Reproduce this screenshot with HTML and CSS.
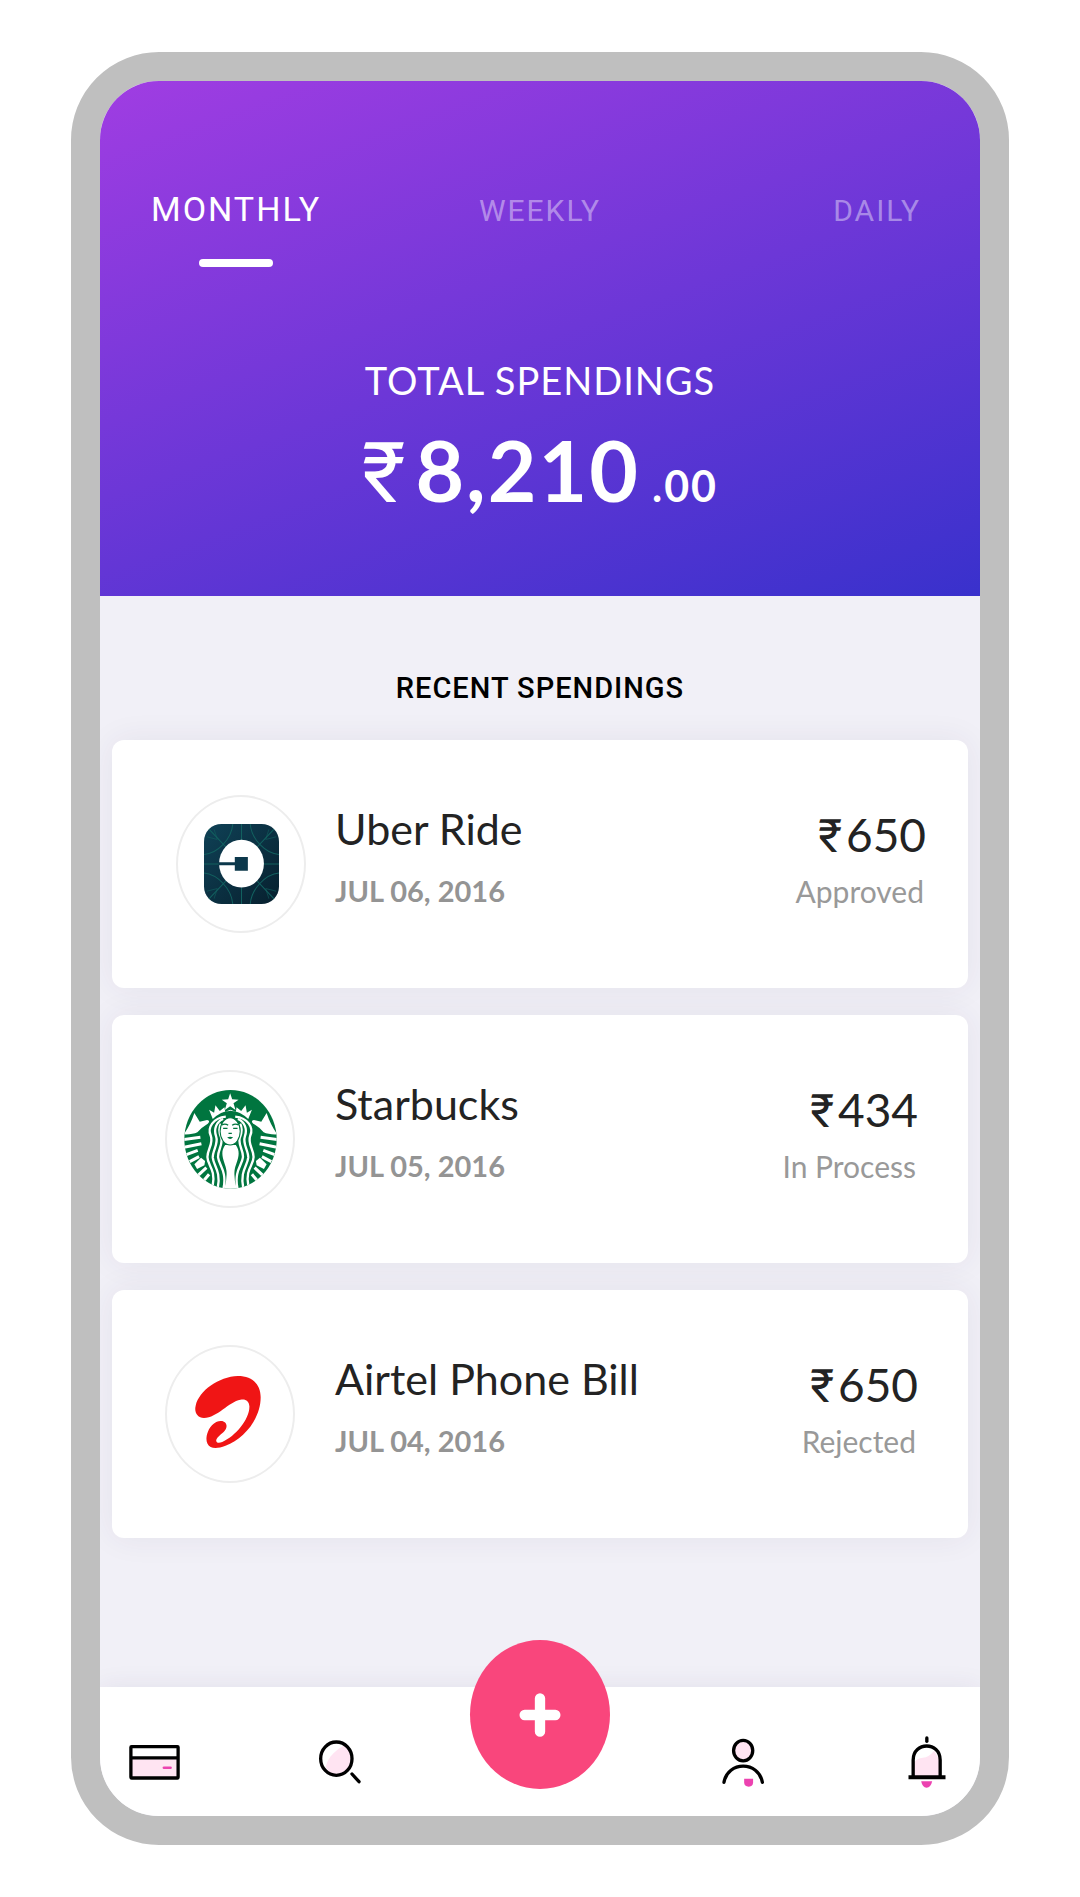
FILE: index.html
```html
<!DOCTYPE html>
<html lang="en">
<head>
  <meta charset="utf-8">
  <meta name="viewport" content="width=device-width, initial-scale=1">
  <title>Spendings</title>
  <link rel="stylesheet" href="styles.css">
</head>
<body>
  <div class="phone">
    <header class="summary">
      <nav class="tabs" aria-label="Period">
        <button class="tab tab--active" type="button" aria-current="true">MONTHLY</button>
        <button class="tab" type="button">WEEKLY</button>
        <button class="tab tab--last" type="button">DAILY</button>
      </nav>
      <h1 class="summary__label">TOTAL SPENDINGS</h1>
      <p class="total"><span class="total__currency">₹</span><span class="total__whole">8,210</span><span class="total__cents">.00</span></p>
    </header>

    <main class="recent">
      <h2 class="recent__title">RECENT SPENDINGS</h2>
      <ul class="spendings">
        <li class="spending spending--inset">
          <span class="logo">
            <svg width="75" height="80" viewBox="310 314 224 238" preserveAspectRatio="none" aria-hidden="true">
              <defs>
                <linearGradient id="uber-fill" x1="0" y1="0" x2="1" y2="1"><stop offset="0" stop-color="#0f4156"/><stop offset="1" stop-color="#07202e"/></linearGradient>
                <clipPath id="uber-clip"><rect x="310" y="314" width="224" height="238" rx="52"/></clipPath>
              </defs>
              <g clip-path="url(#uber-clip)">
                <rect x="310" y="314" width="224" height="238" fill="url(#uber-fill)"/>
                <g fill="none" stroke="#12605f" stroke-width="3">
                  <path d="M310 405C350 402 392 360 396 314M448 314C452 360 494 402 534 405M310 460C350 464 392 506 396 552M448 552C452 506 494 464 534 460"/>
                  <path d="M322 326L375 382M522 326L469 382M322 540L375 484M522 540L469 484M422 314V362M422 503V552M310 433H355M489 433H534"/>
                  <path d="M318 352L350 360M340 330L350 360M526 352L494 360M504 330L494 360M318 514L350 506M340 536L350 506M526 514L494 506M504 536L494 506" opacity=".6"/>
                </g>
              </g>
              <ellipse cx="422" cy="432" rx="67" ry="71" fill="#fff"/>
              <path d="M354 428H402V412H441V453H402V437H354Z" fill="#0c384b"/>
            </svg>
          </span>
          <div class="spending__info">
            <h3 class="spending__name">Uber Ride</h3>
            <p class="spending__date">JUL 06, 2016</p>
          </div>
          <div class="spending__sum">
            <p class="spending__amount"><span class="rupee">₹</span>650</p>
            <p class="spending__status">Approved</p>
          </div>
        </li>

        <li class="spending">
          <span class="logo">
            <svg width="93" height="99" viewBox="101 119 278 297" preserveAspectRatio="none" aria-hidden="true">
              <defs>
                <clipPath id="siren-clip"><ellipse cx="240" cy="267" rx="138" ry="148"/></clipPath>
                <g id="siren-half">
                  <path fill="#fff" d="M240 182Q214 180 187 206L176 178L191 187L195 165L208 182L222 171L224 184L240 178Z"/>
                  <path fill="#fff" d="M132 188L148 214L170 209Q181 211 172 220Q152 232 141 246Q126 253 100 252Q120 225 132 188Z"/>
                  <path fill="none" stroke="#fff" stroke-width="7" d="M226 199C188 203 170 232 181 256C190 280 171 296 171 320C171 345 196 356 187 404"/>
                  <path fill="none" stroke="#fff" stroke-width="7" d="M218 206C198 214 189 236 197 258C205 280 186 300 187 322C189 346 212 362 202 412"/>
                  <path fill="none" stroke="#fff" stroke-width="7" d="M211 220C203 236 207 250 212 262C219 282 200 302 203 322C206 346 230 362 219 416"/>
                  <path fill="none" stroke="#fff" stroke-width="9" d="M98 268L150 261M101 291L153 280M108 313L142 300M118 334L146 319M140 378L168 352M156 396L176 372"/>
                  <path fill="#fff" d="M132 342L152 322L164 332L162 345L140 356Z"/>
                </g>
              </defs>
              <g clip-path="url(#siren-clip)">
                <rect x="100" y="118" width="280" height="300" fill="#00753f"/>
                <use href="#siren-half"/>
                <use href="#siren-half" transform="translate(480 0) scale(-1 1)"/>
                <path fill="#fff" d="M224 284H256C276 312 254 338 252 362Q250 388 259 418H221Q230 388 228 362C226 338 204 312 224 284Z"/>
                <ellipse cx="239" cy="243" rx="30" ry="41" fill="#fff" stroke="#00753f" stroke-width="3"/>
                <path fill="none" stroke="#00753f" stroke-width="4" d="M214 224Q224 218 233 225M245 225Q254 218 264 224M218 234H231M248 234H261M234 249H244"/>
                <path fill="#00753f" d="M230 261Q239 258 248 261Q239 271 230 261Z"/>
              </g>
              <path fill="#fff" d="M239 129L245 147L264 148L249 159L255 179L239 168L223 179L229 159L214 148L233 147Z"/>
            </svg>
          </span>
          <div class="spending__info">
            <h3 class="spending__name">Starbucks</h3>
            <p class="spending__date">JUL 05, 2016</p>
          </div>
          <div class="spending__sum">
            <p class="spending__amount"><span class="rupee">₹</span>434</p>
            <p class="spending__status">In Process</p>
          </div>
        </li>

        <li class="spending">
          <span class="logo logo--airtel">
            <svg width="66" height="72" viewBox="133 141 199 216" preserveAspectRatio="none" aria-hidden="true">
              <path fill="#f01515" d="M160 267C140 266 130 250 135 230C145 185 205 143 262 141C305 141 331 165 331 205C331 270 280 330 225 350C205 358 190 358 180 354C165 346 165 325 172 308C180 288 195 277 210 276C225 275 232 288 226 300C220 312 200 322 197 333C196 342 205 343 215 339C255 322 298 270 297 232C296 215 285 209 270 212C235 218 200 266 160 267Z"/>
            </svg>
          </span>
          <div class="spending__info">
            <h3 class="spending__name">Airtel Phone Bill</h3>
            <p class="spending__date">JUL 04, 2016</p>
          </div>
          <div class="spending__sum">
            <p class="spending__amount"><span class="rupee">₹</span>650</p>
            <p class="spending__status">Rejected</p>
          </div>
        </li>
      </ul>
    </main>

    <nav class="bar" aria-label="Main">
      <div class="bar__group bar__group--start">
        <a class="bar__link" href="#cards" aria-label="Cards">
          <svg width="51" height="35" viewBox="207 373 153 106" aria-hidden="true">
            <rect x="212" y="378" width="143" height="96" rx="2" fill="#fff"/>
            <rect x="212" y="412" width="143" height="61" fill="#ffe4f2"/>
            <rect x="212" y="378" width="143" height="95" rx="2" fill="none" stroke="#000" stroke-width="10"/>
            <path d="M212 412H355" stroke="#000" stroke-width="10"/>
            <path d="M312 442H332" stroke="#ec42b0" stroke-width="8" stroke-linecap="round"/>
          </svg>
        </a>
        <a class="bar__link" href="#search" aria-label="Search">
          <svg width="42" height="44" viewBox="777 363 126 132" aria-hidden="true">
            <path d="M856 378C830 390 805 412 797 443Q808 468 829 468C860 468 876 446 876 420Q874 392 856 378Z" fill="#ffe4f2"/>
            <ellipse cx="829" cy="419" rx="47" ry="50" fill="none" stroke="#000" stroke-width="10"/>
            <path d="M876 465L897 488" stroke="#000" stroke-width="10" stroke-linecap="round"/>
          </svg>
        </a>
      </div>
      <button class="add" type="button" aria-label="Add spending">
        <svg width="42" height="44" viewBox="238 218 124 132" aria-hidden="true">
          <path d="M300 234V334M254 284H346" stroke="#fff" stroke-width="31" stroke-linecap="round"/>
        </svg>
      </button>
      <div class="bar__group bar__group--end">
        <a class="bar__link" href="#profile" aria-label="Profile">
          <svg width="42" height="49" viewBox="845 360 127 148" aria-hidden="true">
            <ellipse cx="909" cy="398" rx="29" ry="31" fill="#ffe4f2" stroke="#000" stroke-width="10"/>
            <path d="M851 494C862 429 956 429 967 494" fill="none" stroke="#000" stroke-width="10" stroke-linecap="round"/>
            <path d="M912 483H939V494Q939 507 926 507Q912 507 912 494Z" fill="#ec42b0"/>
          </svg>
        </a>
        <a class="bar__link" href="#alerts" aria-label="Notifications">
          <svg width="38" height="52" viewBox="626 108 113 156" aria-hidden="true">
            <path d="M704 152L722 182V228H642V190Q652 174 670 173Q688 172 704 152Z" fill="#ffe4f2"/>
            <path d="M641 230V180C641 124 722 124 722 180V230" fill="none" stroke="#000" stroke-width="10"/>
            <path d="M627 232H738" stroke="#000" stroke-width="12"/>
            <path d="M682 114V124" stroke="#000" stroke-width="10" stroke-linecap="round"/>
            <path d="M665 244H698Q694 263 681 263Q669 263 665 244Z" fill="#ec42b0"/>
          </svg>
        </a>
      </div>
    </nav>
  </div>
</body>
</html>
```

FILE: styles.css
```css
* {
  box-sizing: border-box;
}

body {
  margin: 0;
  padding: 52px 71px;
  background: #fff;
  color: #232323;
  font-family: Lato, "Open Sans", sans-serif;
}

h1, h2, h3, p, ul {
  margin: 0;
  padding: 0;
  font-weight: 400;
}

button {
  border: 0;
  background: none;
  cursor: pointer;
}

svg {
  display: block;
}

.phone {
  border: 29px solid #bfbfbf;
  border-radius: 88px;
  overflow: hidden;
  background: #f1f0f7;
}

/* Summary */
.summary {
  padding: 108px 51px 78px;
  background: linear-gradient(160deg, #a03de2, #3931cc);
  color: #fff;
  text-align: center;
}

.tabs {
  display: grid;
  grid-template-columns: 1fr auto 1fr;
  align-items: baseline;
}

.tab {
  padding: 0 8px;
  color: rgba(255, 255, 255, .42);
  font: 400 30px/40px Roboto, sans-serif;
  letter-spacing: 2px;
}

.tab--active {
  display: flex;
  flex-direction: column;
  align-items: center;
  gap: 30px;
  justify-self: start;
  padding: 0;
  color: #fff;
  font-size: 34px;
}

.tab--active::after {
  content: "";
  width: 74px;
  height: 8px;
  border-radius: 4px;
  background: #fff;
}

.tab--last {
  justify-self: end;
}

.summary__label {
  margin-top: 91px;
  font-size: 38px;
  line-height: 44px;
  letter-spacing: 1px;
}

.total {
  display: flex;
  justify-content: center;
  align-items: baseline;
  margin-top: 20px;
  font-size: 84px;
  font-weight: 700;
  line-height: 96px;
  letter-spacing: 2px;
}

.total__currency {
  margin-right: 8px;
  font-family: Roboto, sans-serif;
  font-weight: 400;
  line-height: 80px;
}

.total__cents {
  margin-left: 12px;
  font-size: 43px;
  line-height: 48px;
}

/* Recent spendings */
.recent {
  padding: 76px 12px 149px;
}

.recent__title {
  color: #000;
  font: 500 29px/32px Roboto, sans-serif;
  letter-spacing: 1px;
  text-align: center;
}

.spendings {
  display: grid;
  gap: 27px;
  margin-top: 36px;
  list-style: none;
}

.spending {
  display: grid;
  grid-template-columns: 130px 1fr auto;
  column-gap: 40px;
  padding: 55px 50px 55px 53px;
  border-radius: 12px;
  background: #fff;
  box-shadow: 0 0 32px rgba(50, 40, 90, .07);
}

.spending--inset {
  column-gap: 29px;
  padding-right: 42px;
  padding-left: 64px;
}

.logo {
  display: grid;
  place-items: center;
  height: 138px;
  border: 2px solid #ededed;
  border-radius: 50%;
}

.logo--airtel {
  padding: 0 4px 4px 0;
}

.spending__info {
  padding-top: 10px;
}

.spending__name {
  font-size: 43px;
  line-height: 48px;
}

.spending__date {
  margin-top: 20px;
  color: #949494;
  font-size: 29px;
  font-weight: 700;
  line-height: 36px;
}

.spending__sum {
  padding-top: 12px;
  text-align: right;
}

.spending__amount {
  font-size: 46px;
  line-height: 56px;
}

.rupee {
  margin-right: 4px;
  font-family: Roboto, sans-serif;
}

.spending__status {
  margin-top: 9px;
  padding-right: 2px;
  color: #999;
  font-size: 30px;
  line-height: 36px;
}

/* Bottom bar */
.bar {
  display: grid;
  grid-template-columns: 1fr 140px 1fr;
  background: #fff;
  box-shadow: 0 0 24px rgba(50, 40, 90, .08);
}

.bar__group {
  display: flex;
  justify-content: space-between;
  align-items: center;
  padding-top: 21px;
}

.bar__group--start {
  padding-right: 109px;
  padding-left: 29px;
}

.bar__group--end {
  padding-right: 34px;
  padding-left: 112px;
}

.add {
  display: grid;
  place-items: center;
  height: 149px;
  margin: -47px 0 27px;
  padding: 0;
  border-radius: 50%;
  background: #f9467c;
}
```
